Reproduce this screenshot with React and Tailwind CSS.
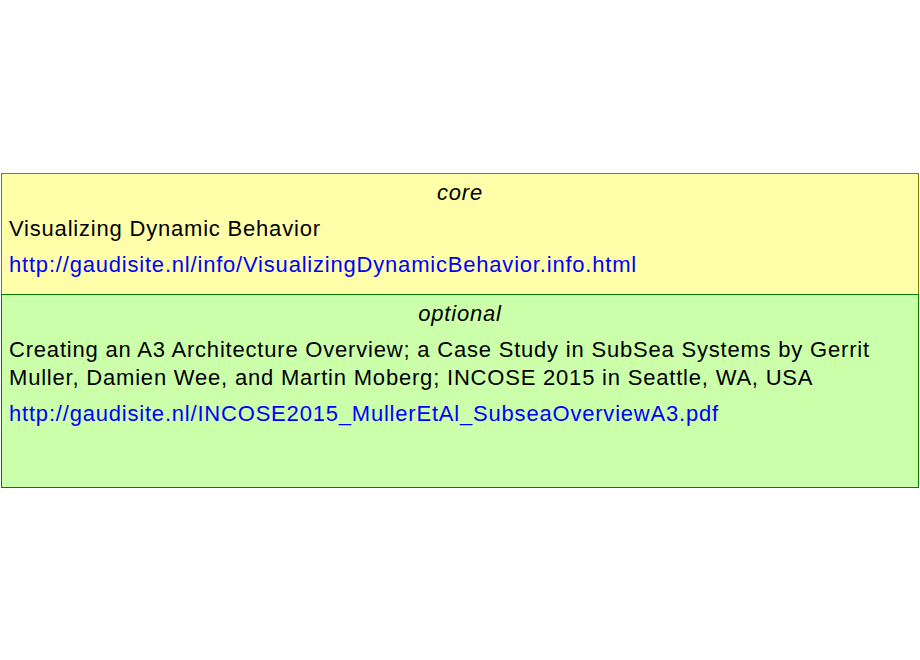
export default function App(){
  return (
    <div className="w-[920px] h-[660px] bg-white pt-[173px] pl-px" style={{fontFamily:'"Liberation Sans", Arial, sans-serif'}}>
      <div className="w-[918px] h-[122px] bg-[#ffffaa] border border-[#808000] px-[7px] text-[22px] tracking-[0.8px] text-black">
        <div className="text-center italic leading-[28px] pt-[5px]">core</div>
        <div className="leading-[28px] mt-[8px]">Visualizing Dynamic Behavior</div>
        <div className="leading-[28px] mt-[8px] text-[#0000ff]">http://gaudisite.nl/info/VisualizingDynamicBehavior.info.html</div>
      </div>
      <div className="w-[918px] h-[194px] -mt-px bg-[#ccffaa] border border-[#008000] px-[7px] text-[22px] tracking-[0.8px] text-black">
        <div className="text-center italic leading-[28px] pt-[5px]">optional</div>
        <div className="leading-[28px] mt-[8px]">Creating an A3 Architecture Overview; a Case Study in SubSea Systems by Gerrit Muller, Damien Wee, and Martin Moberg; INCOSE 2015 in Seattle, WA, USA</div>
        <div className="leading-[28px] mt-[8px] text-[#0000ff]">http://gaudisite.nl/INCOSE2015_MullerEtAl_SubseaOverviewA3.pdf</div>
      </div>
    </div>
  );
}
